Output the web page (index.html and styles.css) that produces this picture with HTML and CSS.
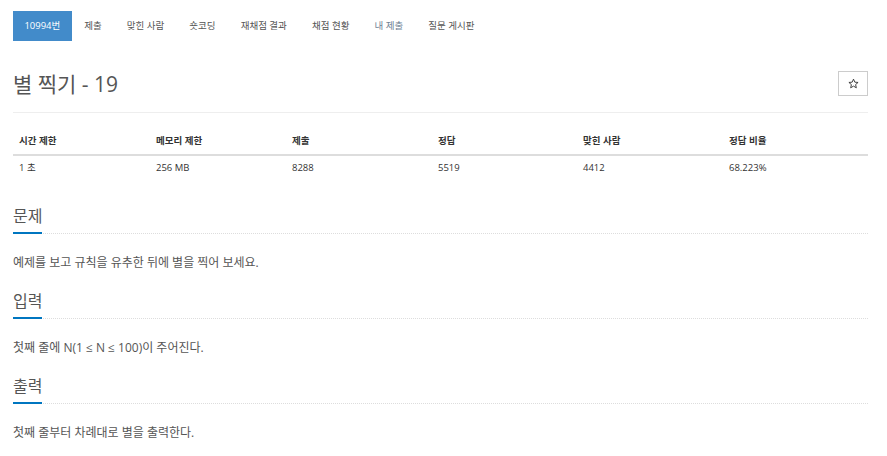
FILE: index.html
```html
<!DOCTYPE html>
<html lang="ko">
<head>
<meta charset="utf-8">
<title>별 찍기 - 19</title>
<link rel="stylesheet" href="styles.css">
</head>
<body>
<div class="container">
  <ul class="nav">
    <li class="nav-item active">10994번</li>
    <li class="nav-item">제출</li>
    <li class="nav-item">맞힌 사람</li>
    <li class="nav-item">숏코딩</li>
    <li class="nav-item">재채점 결과</li>
    <li class="nav-item">채점 현황</li>
    <li class="nav-item muted">내 제출</li>
    <li class="nav-item">질문 게시판</li>
  </ul>

  <div class="title-row">
    <h1 class="title">별 찍기 - 19</h1>
    <button class="star-btn" type="button">
      <svg width="11" height="11" viewBox="0 0 24 24"><path d="M12 2.5l2.9 6.6 7.1.6-5.4 4.7 1.6 7-6.2-3.7-6.2 3.7 1.6-7L2 9.7l7.1-.6z" fill="none" stroke="#333" stroke-width="2" stroke-linejoin="miter"/></svg>
    </button>
  </div>

  <table class="info">
    <colgroup>
      <col class="c1"><col class="c2"><col class="c3"><col class="c4"><col class="c5"><col>
    </colgroup>
    <thead>
      <tr><th>시간 제한</th><th>메모리 제한</th><th>제출</th><th>정답</th><th>맞힌 사람</th><th>정답 비율</th></tr>
    </thead>
    <tbody>
      <tr><td>1 초</td><td>256 MB</td><td>8288</td><td>5519</td><td>4412</td><td>68.223%</td></tr>
    </tbody>
  </table>

  <section class="section">
    <div class="headline"><h2>문제</h2></div>
    <p class="text">예제를 보고 규칙을 유추한 뒤에 별을 찍어 보세요.</p>
  </section>
  <section class="section">
    <div class="headline"><h2>입력</h2></div>
    <p class="text">첫째 줄에 N(1 ≤ N ≤ 100)이 주어진다.</p>
  </section>
  <section class="section">
    <div class="headline"><h2>출력</h2></div>
    <p class="text">첫째 줄부터 차례대로 별을 출력한다.</p>
  </section>
</div>
</body>
</html>
```
FILE: styles.css
```css
* { box-sizing: border-box; }
html, body { margin: 0; padding: 0; background: #fff; }
body {
  font-family: "Open Sans", "Noto Sans CJK KR", sans-serif;
  color: #555;
}
.container { padding: 0 19px 0 13px; }

.nav {
  list-style: none;
  margin: 11px 0 0 0;
  padding: 0;
  display: flex;
}
.nav-item {
  height: 30px;
  line-height: 30px;
  padding: 0 12.55px;
  font-size: 9.5px;
  color: #555;
}
.nav-item.active { background: #428bca; color: #fff; padding: 0 11.4px; }
.nav-item.muted { color: #6f8294; }

.title-row {
  margin-top: 30px;
  padding-bottom: 16px;
  border-bottom: 1px solid #eee;
  display: flex;
  justify-content: space-between;
  align-items: center;
}
.title {
  margin: 0;
  font-size: 21px;
  font-weight: 400;
  line-height: 25px;
  color: #555;
  position: relative;
  top: 1px;
}
.star-btn {
  width: 30px;
  height: 25px;
  border: 1px solid #ccc;
  background: #fff;
  padding: 0;
  display: flex;
  align-items: center;
  justify-content: center;
}

.info {
  width: 100%;
  margin-top: 14px;
  border-collapse: collapse;
  table-layout: fixed;
  font-size: 9.5px;
  color: #333;
}
.info .c1 { width: 137px; }
.info .c2 { width: 136px; }
.info .c3 { width: 146px; }
.info .c4 { width: 145px; }
.info .c5 { width: 146px; }
.info th {
  text-align: left;
  font-weight: 700;
  padding: 7px 6px;
  line-height: 13px;
  border-bottom: 2px solid #ddd;
}
.info td {
  padding: 5px 6px;
  line-height: 13px;
}

.section { margin-top: 19px; }
.section:first-of-type { margin-top: 26px; }
.headline {
  border-bottom: 1px dotted #ddd;
}
.headline h2 {
  display: inline-block;
  margin: 0 0 -1px 0;
  font-size: 16px;
  font-weight: 400;
  line-height: 20px;
  padding-bottom: 6px;
  border-bottom: 2px solid #0076c0;
  color: #555;
}
.text {
  margin: 21px 0 0 0;
  font-size: 12px;
  line-height: 16px;
  color: #555;
}
```
